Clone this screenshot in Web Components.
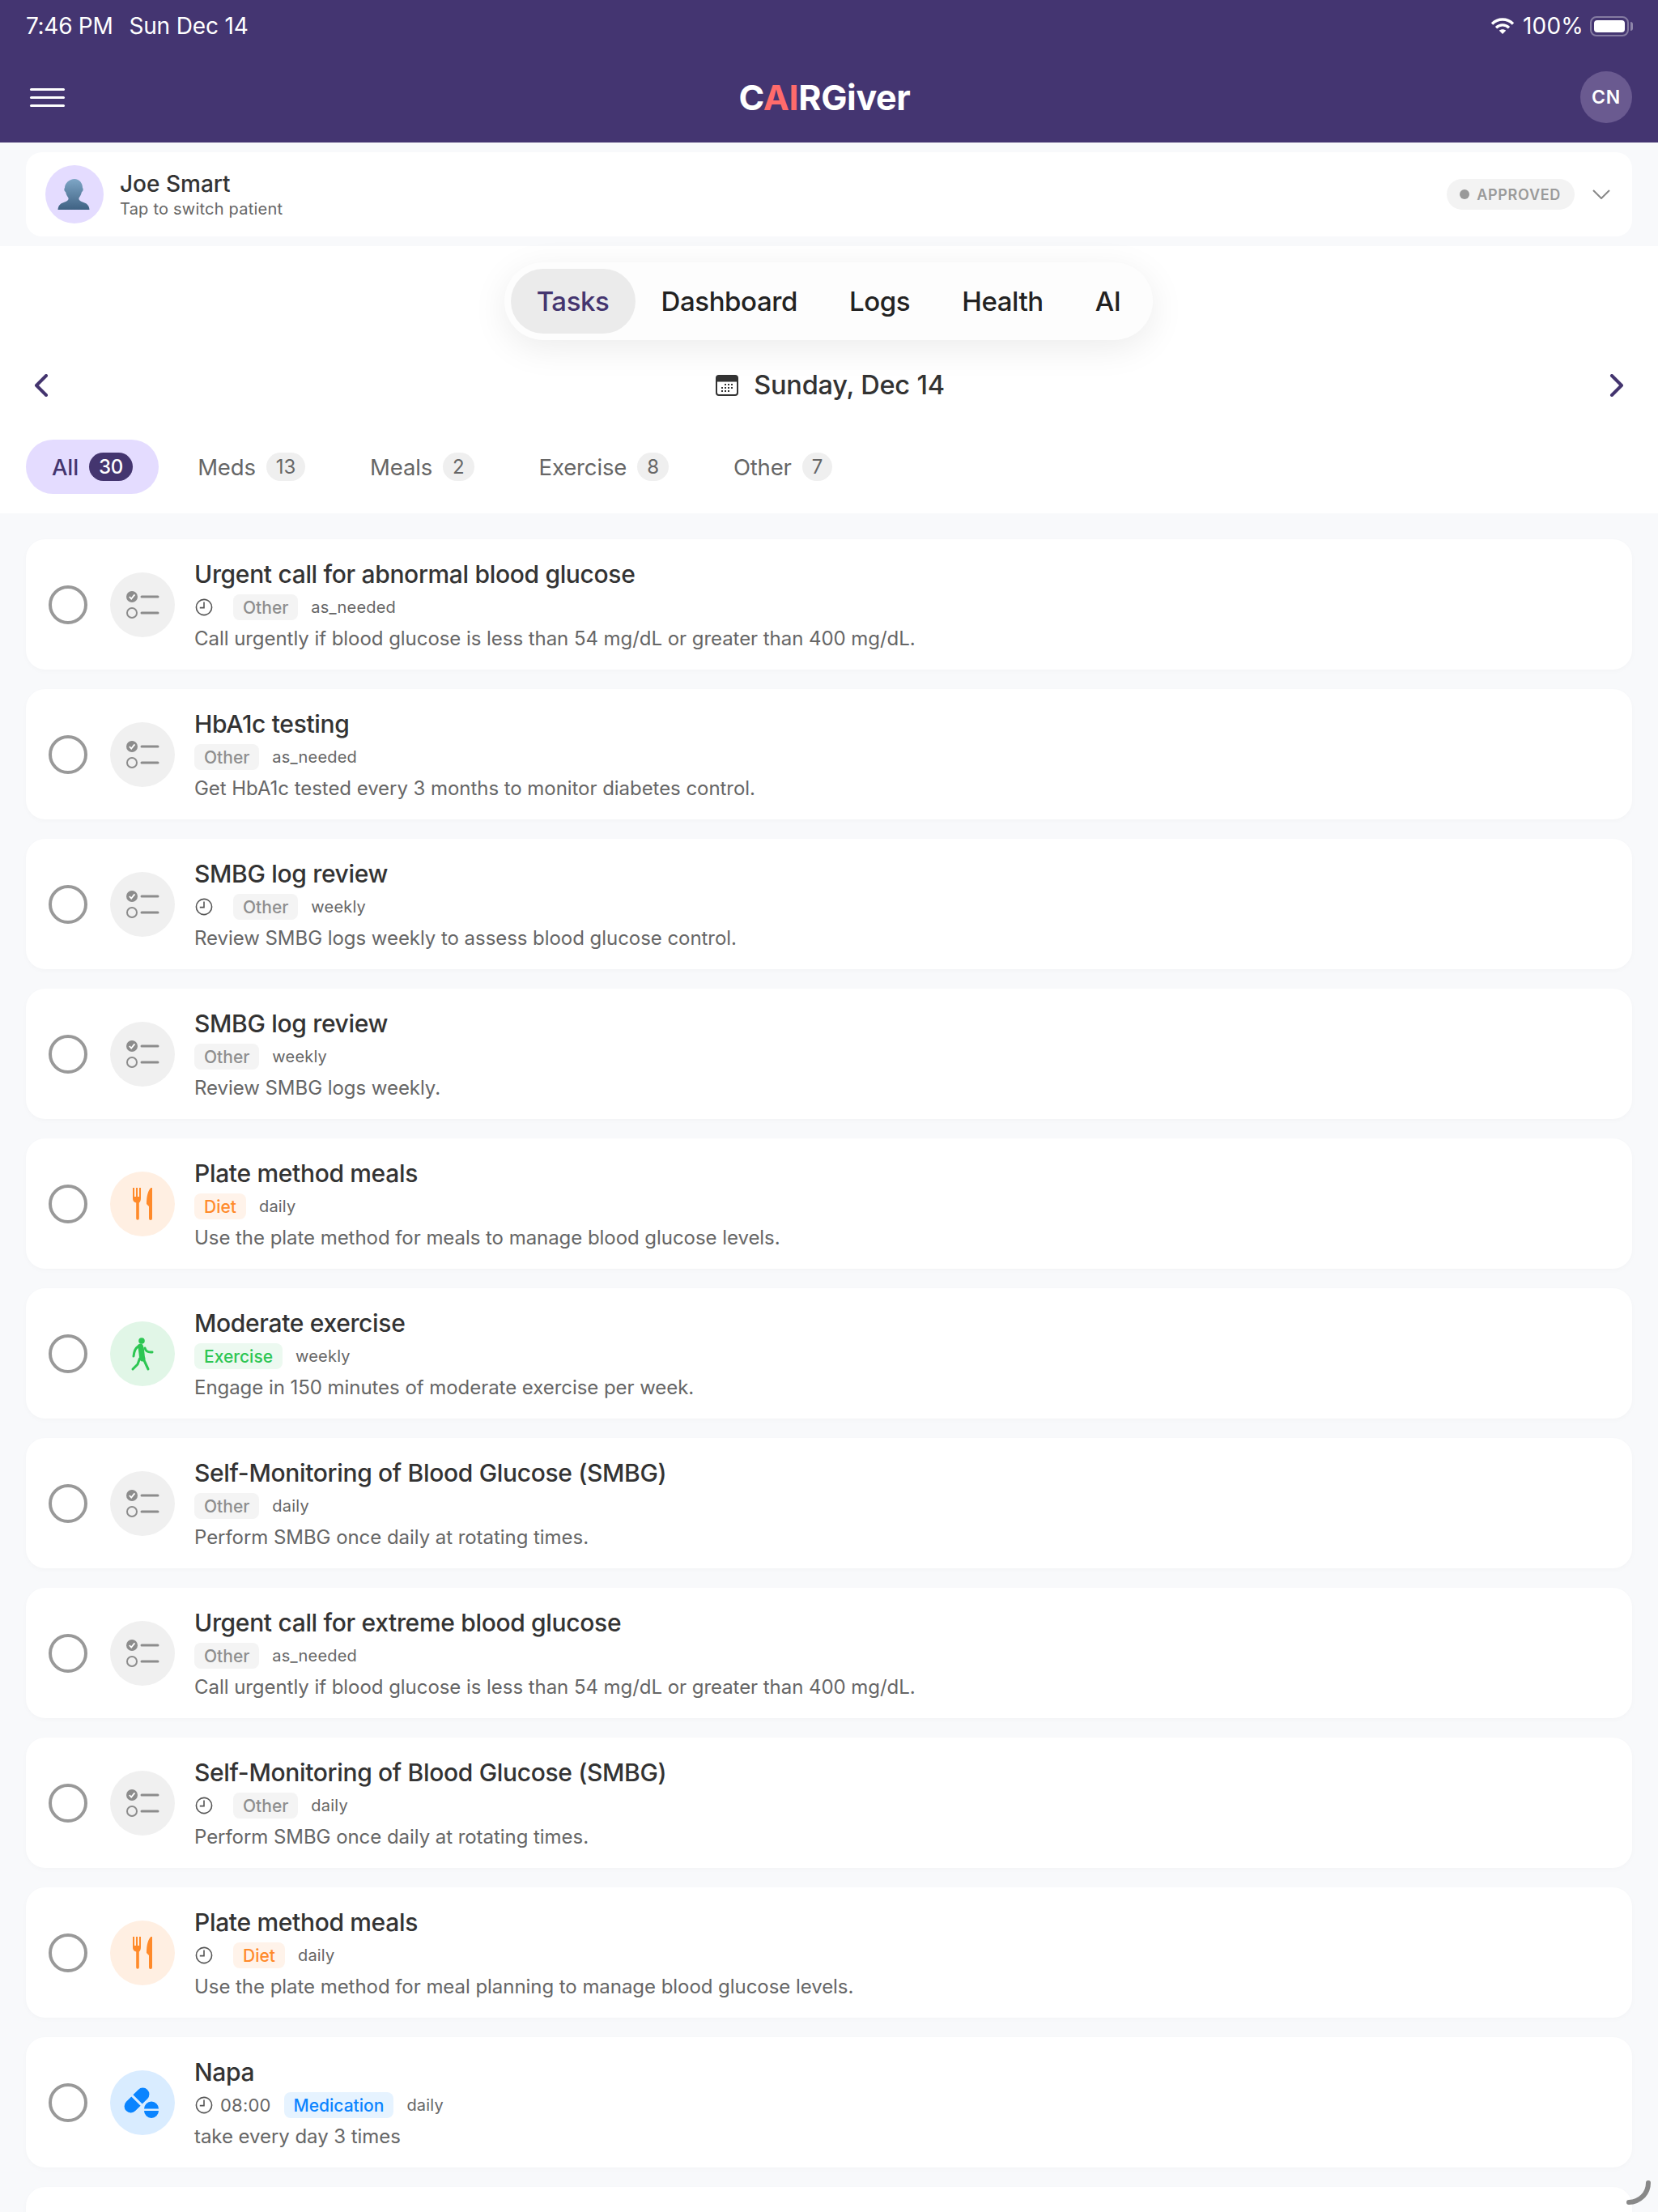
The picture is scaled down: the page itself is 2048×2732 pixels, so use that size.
<!DOCTYPE html>
<html lang="en">
<head>
<meta charset="utf-8">
<title>CAIRGiver</title>
<style>
	html, body {
		margin: 0;
		width: 2048px;
		height: 2732px;
		overflow: hidden;
		background: #f8f9fb;
		font-family: Inter, "Noto Sans", sans-serif;
	}
</style>
</head>
<body>
<care-app>
	<app-header></app-header>
	<patient-switcher name="Joe Smart" hint="Tap to switch patient" status="APPROVED"></patient-switcher>
	<top-panel>
		<segment-tabs></segment-tabs>
		<date-nav>Sunday, Dec 14</date-nav>
		<filter-tabs></filter-tabs>
	</top-panel>
	<task-list>
		<task-card kind="other" tag="Other" freq="as_needed" clock>Urgent call for abnormal blood glucose<span slot="desc">Call urgently if blood glucose is less than 54 mg/dL or greater than 400 mg/dL.</span></task-card>
		<task-card kind="other" tag="Other" freq="as_needed">HbA1c testing<span slot="desc">Get HbA1c tested every 3 months to monitor diabetes control.</span></task-card>
		<task-card kind="other" tag="Other" freq="weekly" clock>SMBG log review<span slot="desc">Review SMBG logs weekly to assess blood glucose control.</span></task-card>
		<task-card kind="other" tag="Other" freq="weekly">SMBG log review<span slot="desc">Review SMBG logs weekly.</span></task-card>
		<task-card kind="diet" tag="Diet" freq="daily">Plate method meals<span slot="desc">Use the plate method for meals to manage blood glucose levels.</span></task-card>
		<task-card kind="exercise" tag="Exercise" freq="weekly">Moderate exercise<span slot="desc">Engage in 150 minutes of moderate exercise per week.</span></task-card>
		<task-card kind="other" tag="Other" freq="daily">Self-Monitoring of Blood Glucose (SMBG)<span slot="desc">Perform SMBG once daily at rotating times.</span></task-card>
		<task-card kind="other" tag="Other" freq="as_needed">Urgent call for extreme blood glucose<span slot="desc">Call urgently if blood glucose is less than 54 mg/dL or greater than 400 mg/dL.</span></task-card>
		<task-card kind="other" tag="Other" freq="daily" clock>Self-Monitoring of Blood Glucose (SMBG)<span slot="desc">Perform SMBG once daily at rotating times.</span></task-card>
		<task-card kind="diet" tag="Diet" freq="daily" clock>Plate method meals<span slot="desc">Use the plate method for meal planning to manage blood glucose levels.</span></task-card>
		<task-card kind="med" tag="Medication" freq="daily" clock time="08:00">Napa<span slot="desc">take every day 3 times</span></task-card>
		<task-card kind="other">Blood</task-card>
	</task-list>
</care-app>

<script>
const careAppTemplate = document.createElement('template');
careAppTemplate.innerHTML = `
	<style>
		:host {
			display: block;
			position: relative;
			width: 2048px;
			height: 2732px;
			overflow: hidden;
			background: #f8f9fb;
		}
		svg {
			position: absolute;
			left: 2009px;
			top: 2693px;
		}
	</style>
	<slot></slot>
	<svg width="30" height="30" viewBox="0 0 30 30" fill="none">
		<path d="M27 3 A24 24 0 0 1 3 27" stroke="#888" stroke-width="6" stroke-linecap="round"/>
	</svg>
`;

class CareApp extends HTMLElement {
	constructor() {
		super();
		this.attachShadow({ mode: 'open' });
	}

	connectedCallback() {
		this.shadowRoot.appendChild(careAppTemplate.content.cloneNode(true));
	}
}

const topPanelTemplate = document.createElement('template');
topPanelTemplate.innerHTML = `
	<style>
		:host {
			display: block;
			height: 330px;
			background: #fff;
		}
	</style>
	<slot></slot>
`;

class TopPanel extends HTMLElement {
	constructor() {
		super();
		this.attachShadow({ mode: 'open' });
	}

	connectedCallback() {
		this.shadowRoot.appendChild(topPanelTemplate.content.cloneNode(true));
	}
}

const appHeaderTemplate = document.createElement('template');
appHeaderTemplate.innerHTML = `
	<style>
		:host {
			display: block;
			height: 176px;
			background: #443571;
			color: #fff;
		}
		.status {
			display: flex;
			align-items: center;
			height: 64px;
			padding: 0 30px 0 32px;
			font-size: 28px;
			letter-spacing: -0.3px;
		}
		.status .date {
			margin-left: 20px;
			letter-spacing: -0.15px;
		}
		.status .right {
			display: flex;
			align-items: center;
			margin-left: auto;
		}
		.status .pct {
			margin: 0 8px 0 10px;
			letter-spacing: 0.2px;
		}
		.battery {
			position: relative;
			box-sizing: border-box;
			width: 48px;
			height: 25px;
			padding: 3px;
			border: 2px solid rgba(255, 255, 255, .35);
			border-radius: 8px;
		}
		.battery i {
			display: block;
			height: 100%;
			background: #fff;
			border-radius: 4px;
		}
		.battery::after {
			content: '';
			position: absolute;
			left: 48px;
			top: 5px;
			width: 3px;
			height: 11px;
			background: rgba(255, 255, 255, .4);
			border-radius: 0 3px 3px 0;
		}
		.nav {
			display: grid;
			grid-template-columns: 1fr auto 1fr;
			align-items: center;
			height: 112px;
			padding: 0 32px 0 37px;
		}
		.menu {
			display: flex;
			flex-direction: column;
			gap: 7px;
			width: 43px;
		}
		.menu i {
			height: 3px;
			background: #fff;
			border-radius: 2px;
		}
		.logo {
			margin-right: 16px;
			font-size: 43px;
			font-weight: 700;
			letter-spacing: -0.35px;
		}
		.logo b {
			font-weight: 700;
			color: #ff6b6b;
		}
		.me {
			justify-self: end;
			display: flex;
			align-items: center;
			justify-content: center;
			width: 64px;
			height: 64px;
			border-radius: 50%;
			background: #6a5a90;
			font-size: 23px;
			font-weight: 600;
			letter-spacing: .8px;
		}
	</style>
	<div class="status">
		<span>7:46 PM</span>
		<span class="date">Sun Dec 14</span>
		<div class="right">
			<svg width="30" height="22" viewBox="0 0 30 22" fill="none" stroke="#fff" stroke-width="3.4">
				<path d="M2 8.4 C9.5 1.2 20.5 1.2 28 8.4"/>
				<path d="M7 13.2 C11.8 8.8 18.2 8.8 23 13.2"/>
				<path d="M15 21 L10.8 16.8 C13.2 14.8 16.8 14.8 19.2 16.8 Z" fill="#fff" stroke="none"/>
			</svg>
			<span class="pct">100%</span>
			<div class="battery"><i></i></div>
			<span style="width:6px"></span>
		</div>
	</div>
	<div class="nav">
		<div class="menu"><i></i><i></i><i></i></div>
		<div class="logo">C<b>AI</b>RGiver</div>
		<div class="me">CN</div>
	</div>
`;

class AppHeader extends HTMLElement {
	constructor() {
		super();
		this.attachShadow({ mode: 'open' });
	}

	connectedCallback() {
		this.shadowRoot.appendChild(appHeaderTemplate.content.cloneNode(true));
	}
}

const patientSwitcherTemplate = document.createElement('template');
patientSwitcherTemplate.innerHTML = `
	<style>
		:host {
			display: block;
			padding: 12px 32px;
			background: #f8f9fb;
		}
		.card {
			display: flex;
			align-items: center;
			height: 104px;
			padding: 0 27px 0 24px;
			background: #fff;
			border-radius: 20px;
		}
		.avatar {
			width: 72px;
			height: 72px;
			margin-right: 20px;
			border-radius: 50%;
			background: #e4dcff;
		}
		.name {
			font-size: 28px;
			font-weight: 500;
			line-height: 34px;
			color: #333;
		}
		.hint {
			margin-top: 1px;
			font-size: 20px;
			line-height: 26px;
			letter-spacing: .22px;
			color: #666;
		}
		.status {
			display: flex;
			align-items: center;
			gap: 9px;
			height: 38px;
			margin-left: auto;
			padding: 0 17px 0 16px;
			background: #f3f3f3;
			border-radius: 19px;
			font-size: 18px;
			font-weight: 600;
			letter-spacing: .7px;
			color: #9a9a9a;
		}
		.status i {
			width: 12px;
			height: 12px;
			border-radius: 50%;
			background: #999;
		}
		.chev {
			margin-left: 22px;
		}
	</style>
	<div class="card">
		<svg class="avatar" viewBox="0 0 72 72">
			<defs>
				<linearGradient id="sil" x1="0" y1="0" x2="0" y2="1">
					<stop offset="0" stop-color="#7ea6c6"/>
					<stop offset="1" stop-color="#3f6283"/>
				</linearGradient>
			</defs>
			<path fill="url(#sil)" d="M36 17 C42 17 46 22 46 28 C47 29 47 32 45 33 C44 37 42.5 39 41.5 40.5 C41 43 43 44.5 46 45.5 C50 46.8 54 48.5 54.5 55 L15.5 55 C16 48.5 20 46.8 24 45.5 C27 44.5 29 43 28.5 40.5 C27.5 39 26 37 25 33 C23 32 23 29 24 28 C24 22 30 17 36 17 Z"/>
		</svg>
		<div>
			<div class="name"></div>
			<div class="hint"></div>
		</div>
		<div class="status"><i></i><span class="label"></span></div>
		<svg class="chev" width="22" height="12" viewBox="0 0 22 12" fill="none" stroke="#888" stroke-width="2">
			<path d="M1 1 L11 11 L21 1"/>
		</svg>
	</div>
`;

class PatientSwitcher extends HTMLElement {
	constructor() {
		super();
		this.attachShadow({ mode: 'open' });
	}

	connectedCallback() {
		const template = patientSwitcherTemplate.content.cloneNode(true);
		template.querySelector('.name').textContent = this.getAttribute('name');
		template.querySelector('.hint').textContent = this.getAttribute('hint');
		template.querySelector('.label').textContent = this.getAttribute('status');
		this.shadowRoot.appendChild(template);
	}
}

const segmentTabsTemplate = document.createElement('template');
segmentTabsTemplate.innerHTML = `
	<style>
		:host {
			display: flex;
			justify-content: center;
			padding-top: 20px;
		}
		.wrap {
			display: flex;
			margin-left: -1px;
			padding: 8px;
			background: #fdfdfd;
			border-radius: 48px;
			box-shadow: 0 10px 44px rgba(0, 0, 0, .08);
		}
		span {
			display: flex;
			align-items: center;
			height: 80px;
			padding: 0 32px;
			border-radius: 40px;
			font-size: 33px;
			font-weight: 500;
			letter-spacing: -0.4px;
			color: #222;
		}
		.on {
			background: #ebebeb;
			color: #44356f;
		}
	</style>
	<div class="wrap">
		<span class="on">Tasks</span>
		<span>Dashboard</span>
		<span>Logs</span>
		<span>Health</span>
		<span>AI</span>
	</div>
`;

class SegmentTabs extends HTMLElement {
	constructor() {
		super();
		this.attachShadow({ mode: 'open' });
	}

	connectedCallback() {
		this.shadowRoot.appendChild(segmentTabsTemplate.content.cloneNode(true));
	}
}

const dateNavTemplate = document.createElement('template');
dateNavTemplate.innerHTML = `
	<style>
		:host {
			display: flex;
			align-items: center;
			justify-content: space-between;
			position: relative;
			height: 56px;
			margin-top: 28px;
			padding: 0 42px;
		}
		.mid {
			display: flex;
			align-items: center;
			gap: 19px;
			margin-left: 3px;
			font-size: 32.5px;
			font-weight: 500;
			line-height: 54px;
			letter-spacing: -0.2px;
			color: #333;
		}
	</style>
	<svg width="18" height="28" viewBox="0 0 18 28" fill="none" stroke="#44356f" stroke-width="4" stroke-linecap="round" stroke-linejoin="round">
		<path d="M15 2 L3 14 L15 26"/>
	</svg>
	<div class="mid">
		<svg width="28" height="26" viewBox="0 0 28 26">
			<rect x="1" y="1" width="26" height="24" rx="3" fill="#fff" stroke="#333" stroke-width="2"/>
			<path d="M1 8 V4 a3 3 0 0 1 3 -3 H24 a3 3 0 0 1 3 3 V8 Z" fill="#333" stroke="#333"/>
			<g fill="#333">
				<rect x="11" y="11" width="2" height="2"/><rect x="15" y="11" width="2" height="2"/><rect x="19" y="11" width="2" height="2"/>
				<rect x="7" y="15" width="2" height="2"/><rect x="11" y="15" width="2" height="2"/><rect x="15" y="15" width="2" height="2"/><rect x="19" y="15" width="2" height="2"/>
				<rect x="7" y="19" width="2" height="2"/><rect x="11" y="19" width="2" height="2"/><rect x="15" y="19" width="2" height="2"/>
			</g>
		</svg>
		<slot></slot>
	</div>
	<svg width="18" height="28" viewBox="0 0 18 28" fill="none" stroke="#44356f" stroke-width="4" stroke-linecap="round" stroke-linejoin="round">
		<path d="M3 2 L15 14 L3 26"/>
	</svg>
`;

class DateNav extends HTMLElement {
	constructor() {
		super();
		this.attachShadow({ mode: 'open' });
	}

	connectedCallback() {
		this.shadowRoot.appendChild(dateNavTemplate.content.cloneNode(true));
	}
}

const filterTabsTemplate = document.createElement('template');
filterTabsTemplate.innerHTML = `
	<style>
		:host {
			display: flex;
			gap: 16px;
			margin-top: 39px;
			padding: 0 32px 24px;
		}
		.tab {
			display: flex;
			align-items: center;
			gap: 13px;
			height: 67px;
			padding: 0 32px;
			border-radius: 34px;
			font-size: 27.5px;
			letter-spacing: -0.15px;
			color: #666;
		}
		.tab i {
			display: flex;
			align-items: center;
			justify-content: center;
			box-sizing: border-box;
			min-width: 37px;
			height: 35px;
			padding: 0 12px;
			border-radius: 18px;
			background: #efefef;
			font-size: 24px;
			font-style: normal;
		}
		.on {
			background: #e4dcff;
			color: #44356f;
			font-weight: 500;
		}
		.on i {
			background: #44356f;
			color: #fff;
		}
	</style>
	<div class="tab on">All <i>30</i></div>
	<div class="tab">Meds <i>13</i></div>
	<div class="tab">Meals <i>2</i></div>
	<div class="tab">Exercise <i>8</i></div>
	<div class="tab">Other <i>7</i></div>
`;

class FilterTabs extends HTMLElement {
	constructor() {
		super();
		this.attachShadow({ mode: 'open' });
	}

	connectedCallback() {
		this.shadowRoot.appendChild(filterTabsTemplate.content.cloneNode(true));
	}
}

const taskListTemplate = document.createElement('template');
taskListTemplate.innerHTML = `
	<style>
		:host {
			display: flex;
			flex-direction: column;
			gap: 24px;
			padding: 32px 32px 0;
			background: #f8f9fb;
		}
	</style>
	<slot></slot>
`;

class TaskList extends HTMLElement {
	constructor() {
		super();
		this.attachShadow({ mode: 'open' });
	}

	connectedCallback() {
		this.shadowRoot.appendChild(taskListTemplate.content.cloneNode(true));
	}
}

const taskIcons = {
	other: `
		<circle cx="27" cy="30" r="7" fill="#8c8c8c"/>
		<path d="M23.8 30 L26.2 32.6 L30.4 27.4" fill="none" stroke="#fff" stroke-width="1.8"/>
		<path d="M39 30 H59 M39 50 H59" stroke="#8c8c8c" stroke-width="3" stroke-linecap="round"/>
		<circle cx="27" cy="50" r="6" fill="none" stroke="#8c8c8c" stroke-width="2"/>`,
	diet: `
		<path fill="#ff8a2a" d="M28 20 H30 V31 H32 V20 H34 V31 H36 V20 H38 V33 C38 36 37 37.5 35.8 38.5 V58 a1.8 1.8 0 0 1 -3.6 0 V38.5 C29 37.5 28 36 28 33 Z"/>
		<path fill="#ff8a2a" d="M52 20 V58 a2 2 0 0 1 -4 0 V43 L45 40 C45 30 47 23 50.5 20 Z"/>`,
	exercise: `
		<circle cx="39" cy="24" r="3.8" fill="#2dc653"/>
		<path d="M37.5 31 C39.5 36 38.5 42 40 46" fill="none" stroke="#2dc653" stroke-width="7" stroke-linecap="round"/>
		<g fill="none" stroke="#2dc653" stroke-width="3" stroke-linecap="round" stroke-linejoin="round">
			<path d="M34.5 31 C31.5 33 29.5 37 29 43"/>
			<path d="M43 33 C44 37 47 38.5 52 38"/>
			<path d="M36.5 46 L34 53 L28 59"/>
			<path d="M41 46 L47 59"/>
		</g>`,
	med: `
		<g transform="rotate(45 33 37)" fill="#0a84ff">
			<path d="M25 37 V28 a8 8 0 0 1 16 0 V37 Z" transform="translate(0 -1.5)"/>
			<path d="M25 37 V46 a8 8 0 0 0 16 0 V37 Z" transform="translate(0 1.5)"/>
		</g>
		<path fill="#0a84ff" d="M42 48 a9 9 0 0 1 18 0 Z M42 50.4 a9 9 0 0 0 18 0 Z" transform="translate(0 -.4)"/>`
};

const taskColors = {
	other: ['#f0f0f0', '#f4f4f4', '#8e8e8e'],
	diet: ['#ffefe2', '#fff3ea', '#ff8a2a'],
	exercise: ['#e1f6e7', '#ecf9f0', '#2dc653'],
	med: ['#d9ecff', '#e6f3ff', '#0a84ff']
};

const taskCardTemplate = document.createElement('template');
taskCardTemplate.innerHTML = `
	<style>
		:host {
			display: block;
			flex: none;
		}
		.card {
			display: flex;
			align-items: center;
			height: 161px;
			box-sizing: border-box;
			padding: 22px 28px 21px;
			background: #fff;
			border-radius: 24px;
			box-shadow: 0 2px 6px rgba(0, 0, 0, .025);
		}
		.radio {
			flex: none;
			box-sizing: border-box;
			width: 48px;
			height: 48px;
			margin-right: 28px;
			border: 4px solid #999;
			border-radius: 50%;
		}
		.icon {
			flex: none;
			width: 80px;
			height: 80px;
			margin-right: 24px;
			border-radius: 50%;
		}
		.body {
			min-width: 0;
			margin-top: 1px;
		}
		.title {
			font-size: 30px;
			font-weight: 500;
			line-height: 40px;
			letter-spacing: -0.33px;
			color: #333;
		}
		.meta {
			display: flex;
			align-items: center;
			height: 32px;
			margin-top: 5px;
			font-size: 20px;
			letter-spacing: .2px;
			color: #666;
		}
		.clock {
			display: block;
			margin-right: 8px;
		}
		.time {
			margin-right: 16px;
			font-size: 22px;
			letter-spacing: .2px;
		}
		.tag {
			display: flex;
			align-items: center;
			height: 32px;
			margin-right: 16px;
			padding: 0 12px;
			border-radius: 8px;
			font-size: 21px;
			font-weight: 500;
			letter-spacing: 0;
		}
		.desc {
			margin-top: 6px;
			font-size: 24px;
			line-height: 34px;
			letter-spacing: -0.05px;
			color: #666;
		}
	</style>
	<div class="card">
		<div class="radio"></div>
		<svg class="icon" viewBox="0 0 80 80"></svg>
		<div class="body">
			<div class="title"><slot></slot></div>
			<div class="meta"></div>
			<div class="desc"><slot name="desc"></slot></div>
		</div>
	</div>
`;

class TaskCard extends HTMLElement {
	constructor() {
		super();
		this.attachShadow({ mode: 'open' });
	}

	connectedCallback() {
		const template = taskCardTemplate.content.cloneNode(true);
		const kind = this.getAttribute('kind');
		const colors = taskColors[kind];
		const icon = template.querySelector('.icon');
		icon.innerHTML = taskIcons[kind];
		icon.style.background = colors[0];

		const meta = template.querySelector('.meta');
		let html = '';
		if (this.hasAttribute('clock')) {
			html += `<svg class="clock" width="24" height="24" viewBox="0 0 24 24" fill="none" stroke="#555" stroke-width="1.6">
				<circle cx="12" cy="12" r="9.6"/><path d="M12 5.6 V12.6 H6.8"/></svg>`;
			html += `<span class="time">${this.getAttribute('time') || ''}</span>`;
		}
		if (this.hasAttribute('tag')) {
			html += `<span class="tag" style="background:${colors[1]};color:${colors[2]}">${this.getAttribute('tag')}</span>`;
			html += `<span>${this.getAttribute('freq')}</span>`;
		}
		meta.innerHTML = html;
		this.shadowRoot.appendChild(template);
	}
}

if (!window.customElements.get('care-app')) {
	window.customElements.define('care-app', CareApp);
	window.customElements.define('top-panel', TopPanel);
	window.customElements.define('app-header', AppHeader);
	window.customElements.define('patient-switcher', PatientSwitcher);
	window.customElements.define('segment-tabs', SegmentTabs);
	window.customElements.define('date-nav', DateNav);
	window.customElements.define('filter-tabs', FilterTabs);
	window.customElements.define('task-list', TaskList);
	window.customElements.define('task-card', TaskCard);
}
</script>
</body>
</html>
